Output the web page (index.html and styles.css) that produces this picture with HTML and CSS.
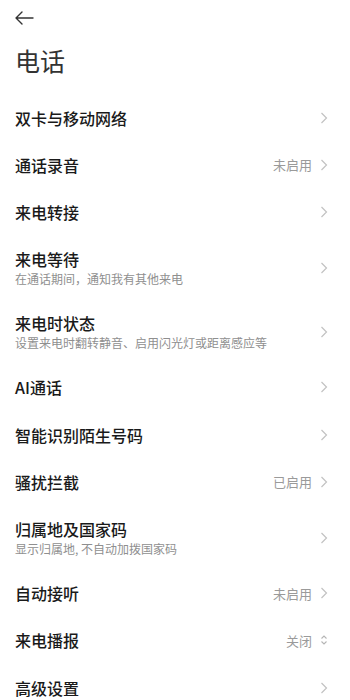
FILE: index.html
```html
<!DOCTYPE html>
<html lang="zh-CN">
<head>
<meta charset="utf-8">
<title>电话</title>
<link rel="stylesheet" href="styles.css">
</head>
<body>
<div class="page">
  <div class="topbar">
    <svg class="back" width="20" height="14" viewBox="0 0 20 14"><path d="M19 7H2M8 1L2 7l6 6" fill="none" stroke="#333" stroke-width="1.4" stroke-linecap="round" stroke-linejoin="round"/></svg>
  </div>
  <h1 class="title">电话</h1>
  <ul class="list">
    <li class="row"><div class="text"><div class="label">双卡与移动网络</div></div><svg class="chev" width="8" height="12" viewBox="0 0 8 12"><path d="M1.5 1l5 5-5 5" fill="none" stroke="#c2c2c2" stroke-width="1.2"/></svg></li>
    <li class="row"><div class="text"><div class="label">通话录音</div></div><span class="value">未启用</span><svg class="chev" width="8" height="12" viewBox="0 0 8 12"><path d="M1.5 1l5 5-5 5" fill="none" stroke="#c2c2c2" stroke-width="1.2"/></svg></li>
    <li class="row"><div class="text"><div class="label">来电转接</div></div><svg class="chev" width="8" height="12" viewBox="0 0 8 12"><path d="M1.5 1l5 5-5 5" fill="none" stroke="#c2c2c2" stroke-width="1.2"/></svg></li>
    <li class="row two"><div class="text"><div class="label">来电等待</div><div class="sub">在通话期间，通知我有其他来电</div></div><svg class="chev" width="8" height="12" viewBox="0 0 8 12"><path d="M1.5 1l5 5-5 5" fill="none" stroke="#c2c2c2" stroke-width="1.2"/></svg></li>
    <li class="row two"><div class="text"><div class="label">来电时状态</div><div class="sub">设置来电时翻转静音、启用闪光灯或距离感应等</div></div><svg class="chev" width="8" height="12" viewBox="0 0 8 12"><path d="M1.5 1l5 5-5 5" fill="none" stroke="#c2c2c2" stroke-width="1.2"/></svg></li>
    <li class="row"><div class="text"><div class="label">AI通话</div></div><svg class="chev" width="8" height="12" viewBox="0 0 8 12"><path d="M1.5 1l5 5-5 5" fill="none" stroke="#c2c2c2" stroke-width="1.2"/></svg></li>
    <li class="row"><div class="text"><div class="label">智能识别陌生号码</div></div><svg class="chev" width="8" height="12" viewBox="0 0 8 12"><path d="M1.5 1l5 5-5 5" fill="none" stroke="#c2c2c2" stroke-width="1.2"/></svg></li>
    <li class="row"><div class="text"><div class="label">骚扰拦截</div></div><span class="value">已启用</span><svg class="chev" width="8" height="12" viewBox="0 0 8 12"><path d="M1.5 1l5 5-5 5" fill="none" stroke="#c2c2c2" stroke-width="1.2"/></svg></li>
    <li class="row two"><div class="text"><div class="label">归属地及国家码</div><div class="sub">显示归属地, 不自动加拨国家码</div></div><svg class="chev" width="8" height="12" viewBox="0 0 8 12"><path d="M1.5 1l5 5-5 5" fill="none" stroke="#c2c2c2" stroke-width="1.2"/></svg></li>
    <li class="row"><div class="text"><div class="label">自动接听</div></div><span class="value">未启用</span><svg class="chev" width="8" height="12" viewBox="0 0 8 12"><path d="M1.5 1l5 5-5 5" fill="none" stroke="#c2c2c2" stroke-width="1.2"/></svg></li>
    <li class="row"><div class="text"><div class="label">来电播报</div></div><span class="value">关闭</span><svg class="chev updown" width="8" height="12" viewBox="0 0 8 12"><path d="M1.5 4.5L4 2l2.5 2.5M1.5 7.5L4 10l2.5-2.5" fill="none" stroke="#b5b5b5" stroke-width="1.1"/></svg></li>
    <li class="row"><div class="text"><div class="label">高级设置</div></div><svg class="chev" width="8" height="12" viewBox="0 0 8 12"><path d="M1.5 1l5 5-5 5" fill="none" stroke="#c2c2c2" stroke-width="1.2"/></svg></li>
  </ul>
</div>
</body>
</html>
```
FILE: styles.css
```css
* { box-sizing: border-box; }
html, body { margin: 0; padding: 0; background: #fff; }
body {
  font-family: "Noto Sans CJK SC", "Noto Sans", "Liberation Sans", sans-serif;
  color: #1a1a1a;
}
.page { width: 350px; overflow: hidden; }
.topbar {
  height: 36px;
  padding: 11px 0 0 14px;
}
.back { display: block; }
.title {
  margin: 0;
  padding: 7px 0 0 15px;
  font-size: 25px;
  line-height: 34px;
  font-weight: 400;
  color: #333;
  height: 58px;
}
.list {
  list-style: none;
  margin: 0;
  padding: 0;
}
.row {
  display: flex;
  align-items: center;
  height: 47.25px;
  padding: 0 22px 0 15px;
}
.row.two { height: 64px; }
.text { flex: 1; min-width: 0; }
.label {
  font-size: 16px;
  line-height: 22px;
  font-weight: 500;
  color: #1a1a1a;
}
.sub {
  font-size: 12px;
  line-height: 16px;
  margin-top: 1px;
  color: #8f8f8f;
}
.value {
  font-size: 13px;
  color: #9a9a9a;
  margin-right: 8px;
}
.chev { display: block; flex: none; }
```
